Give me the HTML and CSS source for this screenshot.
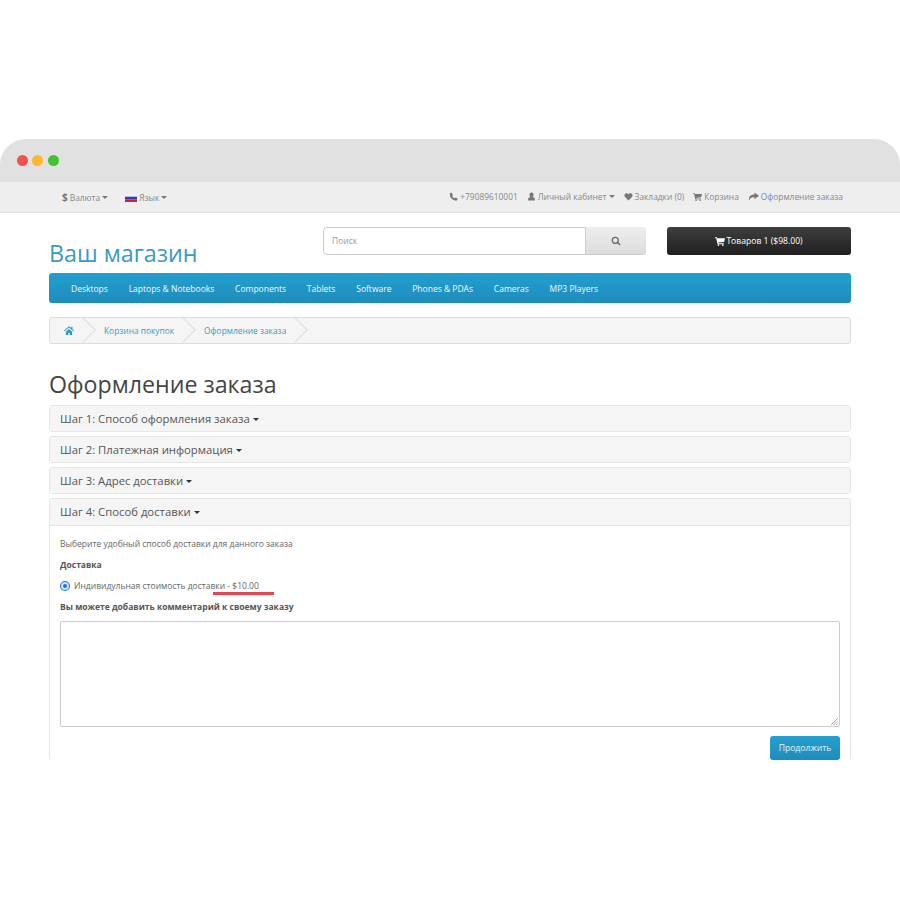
FILE: index.html
```html
<!DOCTYPE html>
<html lang="en">

<head>
  <meta charset="UTF-8" />
  <meta name="viewport" content="width=device-width, initial-scale=1.0" />
  <title>Оформление заказа</title>
  <link rel="stylesheet" href="styles.css">
</head>

<body>
  <div class="window">
    <div class="title-bar">
      <span class="dot dot-red"></span>
      <span class="dot dot-yellow"></span>
      <span class="dot dot-green"></span>
    </div>

    <!-- Top links -->
    <div class="top-bar">
      <div class="top-left">
        <span class="top-item"><b class="dollar">$</b> Валюта <i class="caret"></i></span>
        <span class="top-item">
          <svg class="flag" viewBox="0 0 12 8"><rect width="12" height="2.7" fill="#f2f2f6" /><rect y="2.7" width="12" height="2.7" fill="#2b3fae" /><rect y="5.4" width="12" height="2.6" fill="#d5202c" /></svg>
          Язык <i class="caret"></i>
        </span>
      </div>
      <div class="top-right">
        <span class="top-item">
          <svg class="icon" viewBox="0 0 16 16"><path fill="#777" d="M4 1 1.5 2.5C1 6 2.500 9.500 5 12s5.500 3.500 9 3l1.500-2.800-3.500-2.400-1.800 1.500C8 10.500 6 8 5.500 6.500L7 4.800z" /></svg>
          +79089610001
        </span>
        <span class="top-item">
          <svg class="icon" viewBox="0 0 16 16"><path fill="#777" d="M8 1a3.600 3.600 0 0 1 3.600 4c0 2-1 3.500-1.600 4 2 .6 4 1.500 4 3.500V15H2v-2.500C2 10.500 4 9.600 6 9c-.6-.5-1.600-2-1.600-4A3.600 3.600 0 0 1 8 1z" /></svg>
          Личный кабинет <i class="caret"></i>
        </span>
        <span class="top-item">
          <svg class="icon" viewBox="0 0 16 16"><path fill="#777" d="M8 15 1.800 8.800C-.5 6.300 1 2 4.500 2 6 2 7.300 3 8 4c.7-1 2-2 3.500-2C15 2 16.500 6.300 14.200 8.800z" /></svg>
          Закладки (0)
        </span>
        <span class="top-item">
          <svg class="icon" viewBox="0 0 16 16"><path fill="#777" d="M0 2h3l.5 1.500H16l-1.500 6-9.500 1 .3 1H14v1.500H4L2 3.500H0z" /><circle fill="#777" cx="5.500" cy="14.500" r="1.400" /><circle fill="#777" cx="12.500" cy="14.500" r="1.400" /></svg>
          Корзина
        </span>
        <span class="top-item">
          <svg class="icon icon-wide" viewBox="0 0 16 16"><path fill="#777" d="M9.500 2 16 7l-6.500 5V9C6 9 3 9.500 1.500 14 .5 8 4 5 9.500 5z" /></svg>
          Оформление заказа
        </span>
      </div>
    </div>

    <div class="page">
      <!-- Header -->
      <div class="header">
        <div class="logo">Ваш магазин</div>
        <div class="search">
          <div class="search-input">Поиск</div>
          <div class="search-button">
            <svg class="search-icon" viewBox="0 0 16 16"><circle cx="6.800" cy="6.800" r="4.800" fill="none" stroke="#666" stroke-width="2" /><path d="m10.500 10.500 4 4" stroke="#666" stroke-width="2.400" /></svg>
          </div>
        </div>
        <div class="cart-button">
          <svg class="cart-icon" viewBox="0 0 16 16"><path fill="#fff" d="M0 2h3l.5 1.500H16l-1.500 6-9.500 1 .3 1H14v1.500H4L2 3.500H0z" /><circle fill="#fff" cx="5.500" cy="14.500" r="1.400" /><circle fill="#fff" cx="12.500" cy="14.500" r="1.400" /></svg>
          Товаров 1 ($98.00)
        </div>
      </div>

      <!-- Menu -->
      <div class="menu">
        <a class="menu-link">Desktops</a>
        <a class="menu-link">Laptops &amp; Notebooks</a>
        <a class="menu-link">Components</a>
        <a class="menu-link">Tablets</a>
        <a class="menu-link">Software</a>
        <a class="menu-link">Phones &amp; PDAs</a>
        <a class="menu-link">Cameras</a>
        <a class="menu-link">MP3 Players</a>
      </div>

      <!-- Breadcrumb -->
      <div class="breadcrumb">
        <a class="crumb crumb-home">
          <svg class="home-icon" viewBox="0 0 16 14"><path fill="#2a9bc9" d="M8 0 0 7l1 1.200L8 2.200l7 6L16 7l-2.500-2.200V1h-2v2zM3 9v5h3.800v-3.500h2.400V14H13V9L8 4.700z" /></svg>
        </a>
        <a class="crumb">Корзина покупок</a>
        <a class="crumb">Оформление заказа</a>
      </div>

      <h1 class="page-title">Оформление заказа</h1>

      <!-- Steps -->
      <div class="panel">
        <div class="panel-heading">Шаг 1: Способ оформления заказа <i class="caret caret-dark"></i></div>
      </div>
      <div class="panel">
        <div class="panel-heading">Шаг 2: Платежная информация <i class="caret caret-dark"></i></div>
      </div>
      <div class="panel">
        <div class="panel-heading">Шаг 3: Адрес доставки <i class="caret caret-dark"></i></div>
      </div>
      <div class="panel panel-open">
        <div class="panel-heading">Шаг 4: Способ доставки <i class="caret caret-dark"></i></div>
        <div class="panel-body">
          <p class="hint">Выберите удобный способ доставки для данного заказа</p>
          <p class="label">Доставка</p>
          <div class="radio-row">
            <span class="radio"></span>
            <span class="radio-text">Индивидульная стоимость доставки - $10.00<span class="underline"></span></span>
          </div>
          <p class="label">Вы можете добавить комментарий к своему заказу</p>
          <div class="comment">
            <svg class="resize" viewBox="0 0 8 8"><path d="M8 0 0 8M8 3 3 8M8 6 6 8" stroke="#888" stroke-width=".8" /></svg>
          </div>
          <div class="actions">
            <div class="continue">Продолжить</div>
          </div>
        </div>
      </div>
    </div>
  </div>
</body>

</html>
```

FILE: styles.css
```css
/* Global Reset */
p,
h1 {
  margin: 0;
}

body {
  margin: 0;
  padding-top: 139px;
  font-family: "Open Sans", Arial, sans-serif;
  background-color: white;
  color: #666;
}

/* Browser frame */
.window {
  height: 622px;
  border-radius: 26px 26px 0 0;
  overflow: hidden;
}

.title-bar {
  height: 43px;
  background-color: #e1e1e1;
  display: flex;
  align-items: center;
  gap: 4.300px;
  padding-left: 17px;
}

.dot {
  width: 11px;
  height: 11px;
  border-radius: 50%;
}

.dot-red {
  background-color: #f4504f;
}

.dot-yellow {
  background-color: #fbb632;
}

.dot-green {
  background-color: #45c233;
}

/* Top links */
.top-bar {
  height: 30px;
  background-color: #eeeeee;
  border-bottom: 1px solid #e2e2e2;
  display: flex;
  align-items: center;
  justify-content: space-between;
  padding: 0 57px 0 62px;
  font-size: 8.400px;
  color: #888;
}

.top-left {
  display: flex;
  gap: 17px;
}

.top-right {
  display: flex;
  gap: 9px;
  padding-bottom: 2px;
}

.top-item {
  display: flex;
  align-items: center;
  gap: 2px;
}

.dollar {
  font-size: 10px;
  color: #777;
}

.flag {
  width: 12px;
  height: 8px;
  margin-top: 2px;
}

.icon {
  width: 9px;
  height: 9px;
}

.icon-wide {
  width: 11px;
  height: 11px;
}

.caret {
  display: inline-block;
  width: 0;
  height: 0;
  border-top: 3px solid #777;
  border-left: 3px solid transparent;
  border-right: 3px solid transparent;
  vertical-align: middle;
}

.caret-dark {
  border-top-color: #333;
}

.page {
  padding: 0 49px;
}

/* Header */
.header {
  display: flex;
  align-items: flex-start;
  height: 60px;
}

.logo {
  width: 274px;
  margin-top: 24px;
  font-size: 23.300px;
  line-height: 33px;
  color: #3a9ac4;
}

.search {
  display: flex;
  width: 323px;
  height: 28px;
  margin-top: 14px;
}

.search-input {
  flex: 1;
  box-sizing: border-box;
  padding-left: 8px;
  background-color: white;
  border: 1px solid #ccc;
  border-radius: 4px 0 0 4px;
  font-size: 8.500px;
  line-height: 26px;
  color: #999;
}

.search-button {
  width: 60px;
  display: flex;
  align-items: center;
  justify-content: center;
  background: linear-gradient(to bottom, #eeeeee, #dcdcdc);
  border-radius: 0 4px 4px 0;
  box-shadow: inset 0 -1px 0 #ccc;
}

.search-icon {
  width: 10px;
  height: 10px;
}

.cart-button {
  width: 184px;
  height: 28px;
  margin-top: 14px;
  margin-left: 21px;
  display: flex;
  align-items: center;
  justify-content: center;
  gap: 1px;
  background: linear-gradient(to bottom, #3f3f3f, #1f1f1f);
  border-radius: 3px;
  font-size: 8.600px;
  color: white;
}

.cart-icon {
  width: 10px;
  height: 10px;
}

/* Menu */
.menu {
  height: 30px;
  padding-left: 22px;
  display: flex;
  align-items: center;
  gap: 20.800px;
  background: linear-gradient(to bottom, #239fd0, #1f8cbb);
  border-radius: 3px;
  font-size: 8.500px;
  color: #f0f8fb;
}

/* Breadcrumb */
.breadcrumb {
  height: 25px;
  margin-top: 14px;
  display: flex;
  background-color: #f5f5f5;
  border: 1px solid #ddd;
  border-radius: 3px;
  overflow: hidden;
  font-size: 8.400px;
  color: #3a9ac4;
}

.crumb {
  position: relative;
  display: flex;
  align-items: center;
  padding: 0 10px 0 20px;
}

/* chevron after each crumb */
.crumb::after {
  content: "";
  position: absolute;
  right: -8px;
  top: 3px;
  width: 18px;
  height: 18px;
  box-sizing: border-box;
  border-top: 1px solid #ddd;
  border-right: 1px solid #ddd;
  transform: rotate(45deg);
}

.crumb-home {
  padding: 0 10px 0 14px;
}

.home-icon {
  width: 10px;
  height: 9px;
}

/* Steps */
.page-title {
  margin-top: 23px;
  margin-bottom: 4px;
  font-size: 23.200px;
  line-height: 34px;
  font-weight: 400;
  color: #444;
}

.panel {
  margin-bottom: 4px;
  border: 1px solid #e6e6e6;
  border-radius: 3px;
}

.panel-heading {
  height: 25px;
  box-sizing: border-box;
  padding-left: 10px;
  background-color: #f5f5f5;
  font-size: 11.300px;
  line-height: 25px;
  color: #555;
}

.panel-open {
  border-bottom: none;
}

.panel-open .panel-heading {
  height: 27px;
  border-bottom: 1px solid #e6e6e6;
}

.panel-body {
  padding: 12px 10px 0;
  font-size: 8.500px;
  color: #666;
}

.hint {
  line-height: 12px;
}

.label {
  margin-top: 9px;
  line-height: 12px;
  font-weight: 700;
  color: #555;
}

.radio-row {
  display: flex;
  align-items: center;
  gap: 5px;
  margin-top: 9px;
  line-height: 12px;
}

.radio {
  width: 4px;
  height: 4px;
  border: 2px solid #cfe3fb;
  border-radius: 50%;
  background-color: #1a73e8;
  box-shadow: 0 0 0 1px #1a73e8;
  margin-left: 1px;
}

.radio-text {
  position: relative;
}

.underline {
  position: absolute;
  right: -15px;
  bottom: -3px;
  width: 61px;
  height: 3px;
  background-color: #e2474f;
}

.comment {
  position: relative;
  height: 104px;
  margin-top: 8px;
  background-color: white;
  border: 1px solid #ccc;
  border-radius: 2px;
}

.resize {
  position: absolute;
  right: 1px;
  bottom: 1px;
  width: 7px;
  height: 7px;
}

.actions {
  display: flex;
  justify-content: flex-end;
  margin-top: 9px;
}

.continue {
  width: 70px;
  height: 24px;
  display: flex;
  align-items: center;
  justify-content: center;
  background: linear-gradient(to bottom, #25a0d0, #1f8cbb);
  border-radius: 3px;
  font-size: 8.600px;
  color: #e4f2f8;
}
```
